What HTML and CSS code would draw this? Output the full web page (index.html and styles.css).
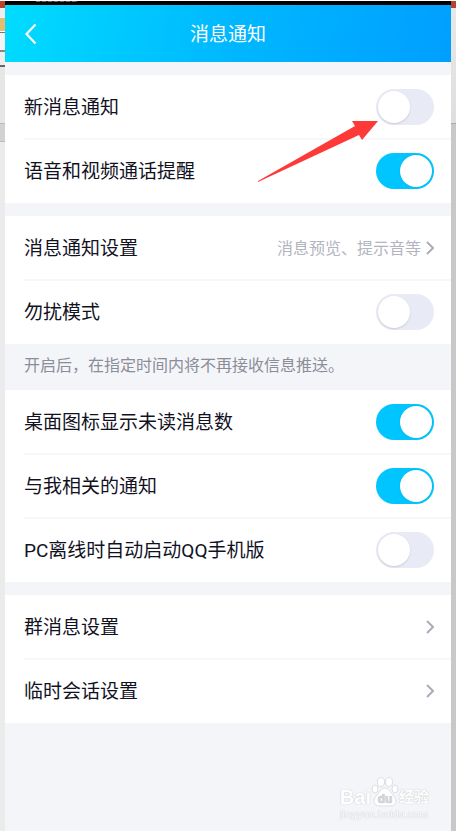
FILE: index.html
```html
<!DOCTYPE html>
<html lang="zh-CN">
<head>
<meta charset="utf-8">
<meta name="viewport" content="width=device-width, initial-scale=1">
<title>消息通知</title>
<link rel="stylesheet" href="styles.css">
</head>
<body>
<div class="edge edge-left"></div>
<div class="phone">
  <div class="status"><span class="status-mark"></span></div>
  <header class="header">
    <button class="back" type="button" aria-label="返回">
      <svg width="12" height="22" viewBox="0 0 12 22"><path d="M10.500 1.500 1.500 11l9 9.500" fill="none" stroke="#fff" stroke-width="2.200"/></svg>
    </button>
    <h1 class="title">消息通知</h1>
  </header>
  <main>
    <section class="group">
      <div class="row"><label class="name" for="new">新消息通知</label><input class="switch" type="checkbox" role="switch" id="new"></div>
      <div class="row"><label class="name" for="call">语音和视频通话提醒</label><input class="switch" type="checkbox" role="switch" id="call" checked></div>
      <svg class="pointer" width="122" height="64" viewBox="0 0 122 64" aria-hidden="true"><path d="M1 61 98 6l-3-5h26l-16 19-3-5L1 62z" fill="#fd3a38"/></svg>
    </section>
    <section class="group">
      <a class="row" href="#alert"><span class="name">消息通知设置</span><span class="value">消息预览、提示音等</span><svg class="chevron" width="8" height="14" viewBox="0 0 8 14"><path d="m1 1 6 6-6 6"/></svg></a>
      <div class="row"><label class="name" for="quiet">勿扰模式</label><input class="switch" type="checkbox" role="switch" id="quiet"></div>
    </section>
    <p class="hint">开启后，在指定时间内将不再接收信息推送。</p>
    <section class="group group-joined">
      <div class="row"><label class="name" for="badge">桌面图标显示未读消息数</label><input class="switch" type="checkbox" role="switch" id="badge" checked></div>
      <div class="row"><label class="name" for="related">与我相关的通知</label><input class="switch" type="checkbox" role="switch" id="related" checked></div>
      <div class="row"><label class="name" for="pc">PC离线时自动启动QQ手机版</label><input class="switch" type="checkbox" role="switch" id="pc"></div>
    </section>
    <section class="group">
      <a class="row" href="#group"><span class="name">群消息设置</span><svg class="chevron" width="8" height="14" viewBox="0 0 8 14"><path d="m1 1 6 6-6 6"/></svg></a>
      <a class="row" href="#temp"><span class="name">临时会话设置</span><svg class="chevron" width="8" height="14" viewBox="0 0 8 14"><path d="m1 1 6 6-6 6"/></svg></a>
    </section>
  </main>
  <div class="watermark">
    <div class="brand"><span class="latin">Bai</span><svg class="paw" width="28" height="30" viewBox="0 0 28 30"><g fill="#fff" stroke="#dcdee1"><ellipse cx="4" cy="12" rx="3" ry="4"/><ellipse cx="10" cy="5" rx="3.500" ry="4.500"/><ellipse cx="18" cy="5" rx="3.500" ry="4.500"/><ellipse cx="24" cy="12" rx="3" ry="4"/><path d="M14 11c-4 0-5 4-8 7-5 5-3 11 2 11h12c5 0 7-6 2-11-3-3-4-7-8-7z"/></g><text class="du" x="14" y="26" text-anchor="middle">du</text></svg><span class="cjk">经验</span></div>
    <div class="domain">jingyan.baidu.com</div>
  </div>
</div>
<div class="edge edge-right"></div>
</body>
</html>
```
FILE: styles.css
```css
* { box-sizing: border-box; }

body {
  margin: 0;
  min-height: 100vh;
  display: flex;
  background: #f4f5f8;
  color: #12121f;
  font-family: Roboto, "Noto Sans CJK SC", sans-serif;
}

.edge { flex: 0 0 5px; }

.edge-left {
  background: linear-gradient(#fff 0 1px, #b7432b 1px 8px, #eee 8px 18px, #e4bd70 18px 31px, #fff 31px 32px, #777 32px 33px, #f4f4f4 33px 50px, #888 50px 52px, #eee 52px 65px, #666 65px 67px, #e6e6e6 67px 123px, #bbb 123px 124px, #d2d2d2 124px 141px, #bbb 141px 142px, #ebebeb 142px);
}

.edge-right {
  background: linear-gradient(#fff 0 1px, #b7432b 1px 8px, #e8e8e8 8px, #dedede 123px, #aaa 123px 124px, #c8c8c8 124px);
}

.phone {
  flex: 1;
  min-width: 0;
  display: flex;
  flex-direction: column;
}

.status {
  height: 5px;
  border-top: 1px solid #fff;
  background: #000;
}

.status-mark {
  display: block;
  width: 42px;
  height: 1px;
  margin-left: 31px;
  background: repeating-linear-gradient(90deg, #666 0 4px, #222 4px 6px);
}

.header {
  display: grid;
  grid-template-columns: 52px 1fr 52px;
  align-items: center;
  height: 57px;
  background: linear-gradient(100deg, #00dcff, #00b8ff 50%, #009fff);
}

.back {
  display: flex;
  padding: 0 0 0 20px;
  border: 0;
  background: none;
}

.title {
  margin: 0;
  padding-top: 2px;
  color: #fff;
  font-size: 19px;
  font-weight: 400;
  line-height: 28px;
  text-align: center;
}

.group {
  position: relative;
  margin-top: 13px;
  background: #fff;
}

.group-joined { margin-top: 0; }

.row {
  position: relative;
  display: flex;
  align-items: center;
  height: 64px;
  padding: 0 17px 0 19px;
  color: inherit;
  text-decoration: none;
}

.row + .row::before {
  content: "";
  position: absolute;
  top: -1px;
  left: 19px;
  right: 0;
  height: 2px;
  background: #f7f7f9;
}

.name {
  flex: 1;
  padding-top: 2px;
  font-size: 19px;
  line-height: 28px;
}

.value {
  padding-top: 2px;
  margin-right: 5px;
  color: #b3b4bf;
  font-size: 16px;
  line-height: 24px;
}

.chevron {
  fill: none;
  stroke: #acadb8;
  stroke-width: 2;
}

.switch {
  appearance: none;
  width: 58px;
  height: 36px;
  margin: 0;
  padding: 2px;
  border-radius: 18px;
  background: #e8ebf5;
}

.switch::before {
  content: "";
  display: block;
  width: 32px;
  height: 32px;
  border-radius: 50%;
  background: #fff;
  box-shadow: 0 1px 2px #c9cbd8;
}

.switch:checked { background: #00c5ff; }

.switch:checked::before {
  margin-left: auto;
  box-shadow: 0 0 2px #0aaeea;
}

.pointer {
  position: absolute;
  top: 45px;
  right: 72px;
  z-index: 1;
}

.hint {
  margin: 0;
  padding: 10px 19px 12px;
  color: #8b8d99;
  font-size: 16px;
  line-height: 24px;
}

.watermark {
  align-self: flex-end;
  margin: auto 22px 10px 0;
  color: #fff;
  text-shadow: 0 0 1px #c8cacd, 0 0 1px #c8cacd;
}

.brand {
  display: flex;
  align-items: flex-end;
  height: 30px;
}

.latin {
  font: 700 20px/20px "Liberation Sans", sans-serif;
}

.du {
  fill: #d3d5d9;
  font: 700 12px "Liberation Sans", sans-serif;
}

.cjk {
  font-size: 15px;
  font-weight: 700;
  line-height: 20px;
}

.domain {
  font: 11px/14px "Liberation Sans", sans-serif;
}
```
